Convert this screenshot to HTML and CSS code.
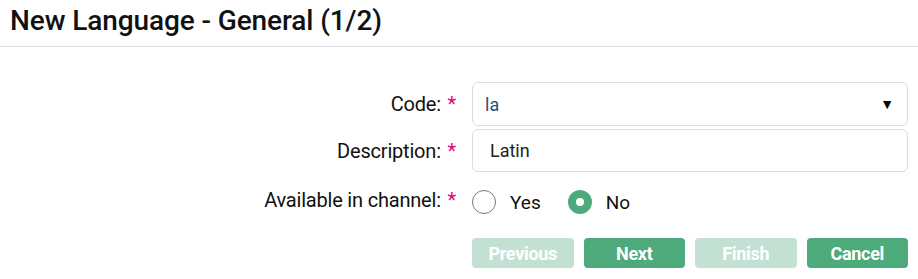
FILE: index.html
```html
<!DOCTYPE html>
<html lang="en">
<head>
    <meta charset="UTF-8">
    <title>New Language</title>
    <link rel="stylesheet" href="styles.css">
</head>
<body>
    <div class="header">
        <h1>New Language - General (1/2)</h1>
    </div>

    <form class="wizard">
        <label class="field-label" for="code">Code: <span class="req">*</span></label>
        <div class="select-box" id="code">
            <span class="select-value">la</span>
            <span class="arrow">&#9660;</span>
        </div>

        <label class="field-label" for="desc">Description: <span class="req">*</span></label>
        <input type="text" id="desc" class="text-input" value="Latin">

        <div class="field-label">Available in channel: <span class="req">*</span></div>
        <div class="radios">
            <span class="radio"></span><span class="radio-text">Yes</span>
            <span class="radio checked"></span><span class="radio-text">No</span>
        </div>

        <div class="buttons">
            <button type="button" class="btn disabled">Previous</button>
            <button type="button" class="btn">Next</button>
            <button type="button" class="btn disabled">Finish</button>
            <button type="button" class="btn">Cancel</button>
        </div>
    </form>
</body>
</html>
```

FILE: styles.css
```css
body {
    margin: 0;
    font-family: Roboto, "Liberation Sans", sans-serif;
    background: #fff;
    color: #111;
}

.header {
    border-bottom: 1px solid #dedede;
    padding: 4px 10px 0 10px;
    box-sizing: border-box;
    height: 47px;
}

.header h1 {
    margin: 0;
    font-size: 28px;
    font-weight: 500;
    line-height: 34px;
    letter-spacing: -0.1px;
}

.wizard {
    display: grid;
    grid-template-columns: 1fr 436px;
    column-gap: 16px;
    row-gap: 3px;
    padding: 35px 10px 0 0;
}

.field-label {
    text-align: right;
    font-size: 20px;
    font-weight: 400;
    align-self: center;
    color: #111;
    letter-spacing: -0.2px;
}

.req {
    color: #e6007e;
    margin-left: 2px;
}

.select-box {
    height: 42px;
    border: 1px solid #dcdcdc;
    border-radius: 6px;
    display: flex;
    align-items: center;
    justify-content: space-between;
    padding: 0 13px 0 12px;
}

.select-value {
    color: #2b4f7a;
    font-size: 18px;
}

.arrow {
    font-size: 14px;
    color: #000;
}

.text-input {
    height: 43px;
    box-sizing: border-box;
    border: 1px solid #dcdcdc;
    border-radius: 6px;
    padding: 0 17px;
    font-family: Roboto, sans-serif;
    font-size: 18px;
    color: #222;
}

.radios {
    display: flex;
    align-items: center;
    height: 44px;
    margin-top: 5px;
}

.radio {
    width: 24px;
    height: 24px;
    border: 1px solid #777;
    border-radius: 50%;
    box-sizing: border-box;
}

.radio.checked {
    border: 8px solid #4caa7b;
    background: #fff;
}

.radio-text {
    font-size: 19px;
    margin: 0 27px 0 14px;
    color: #111;
}

.buttons {
    grid-column: 2;
    display: flex;
    gap: 10px;
    margin-top: 11px;
}

.btn {
    flex: 1;
    height: 30px;
    border: none;
    border-radius: 4px;
    background: #4caa7b;
    color: #fff;
    font-family: Roboto, sans-serif;
    font-size: 18px;
    font-weight: 700;
    letter-spacing: -0.3px;
}

.btn.disabled {
    background: #c3e1d3;
}
```
